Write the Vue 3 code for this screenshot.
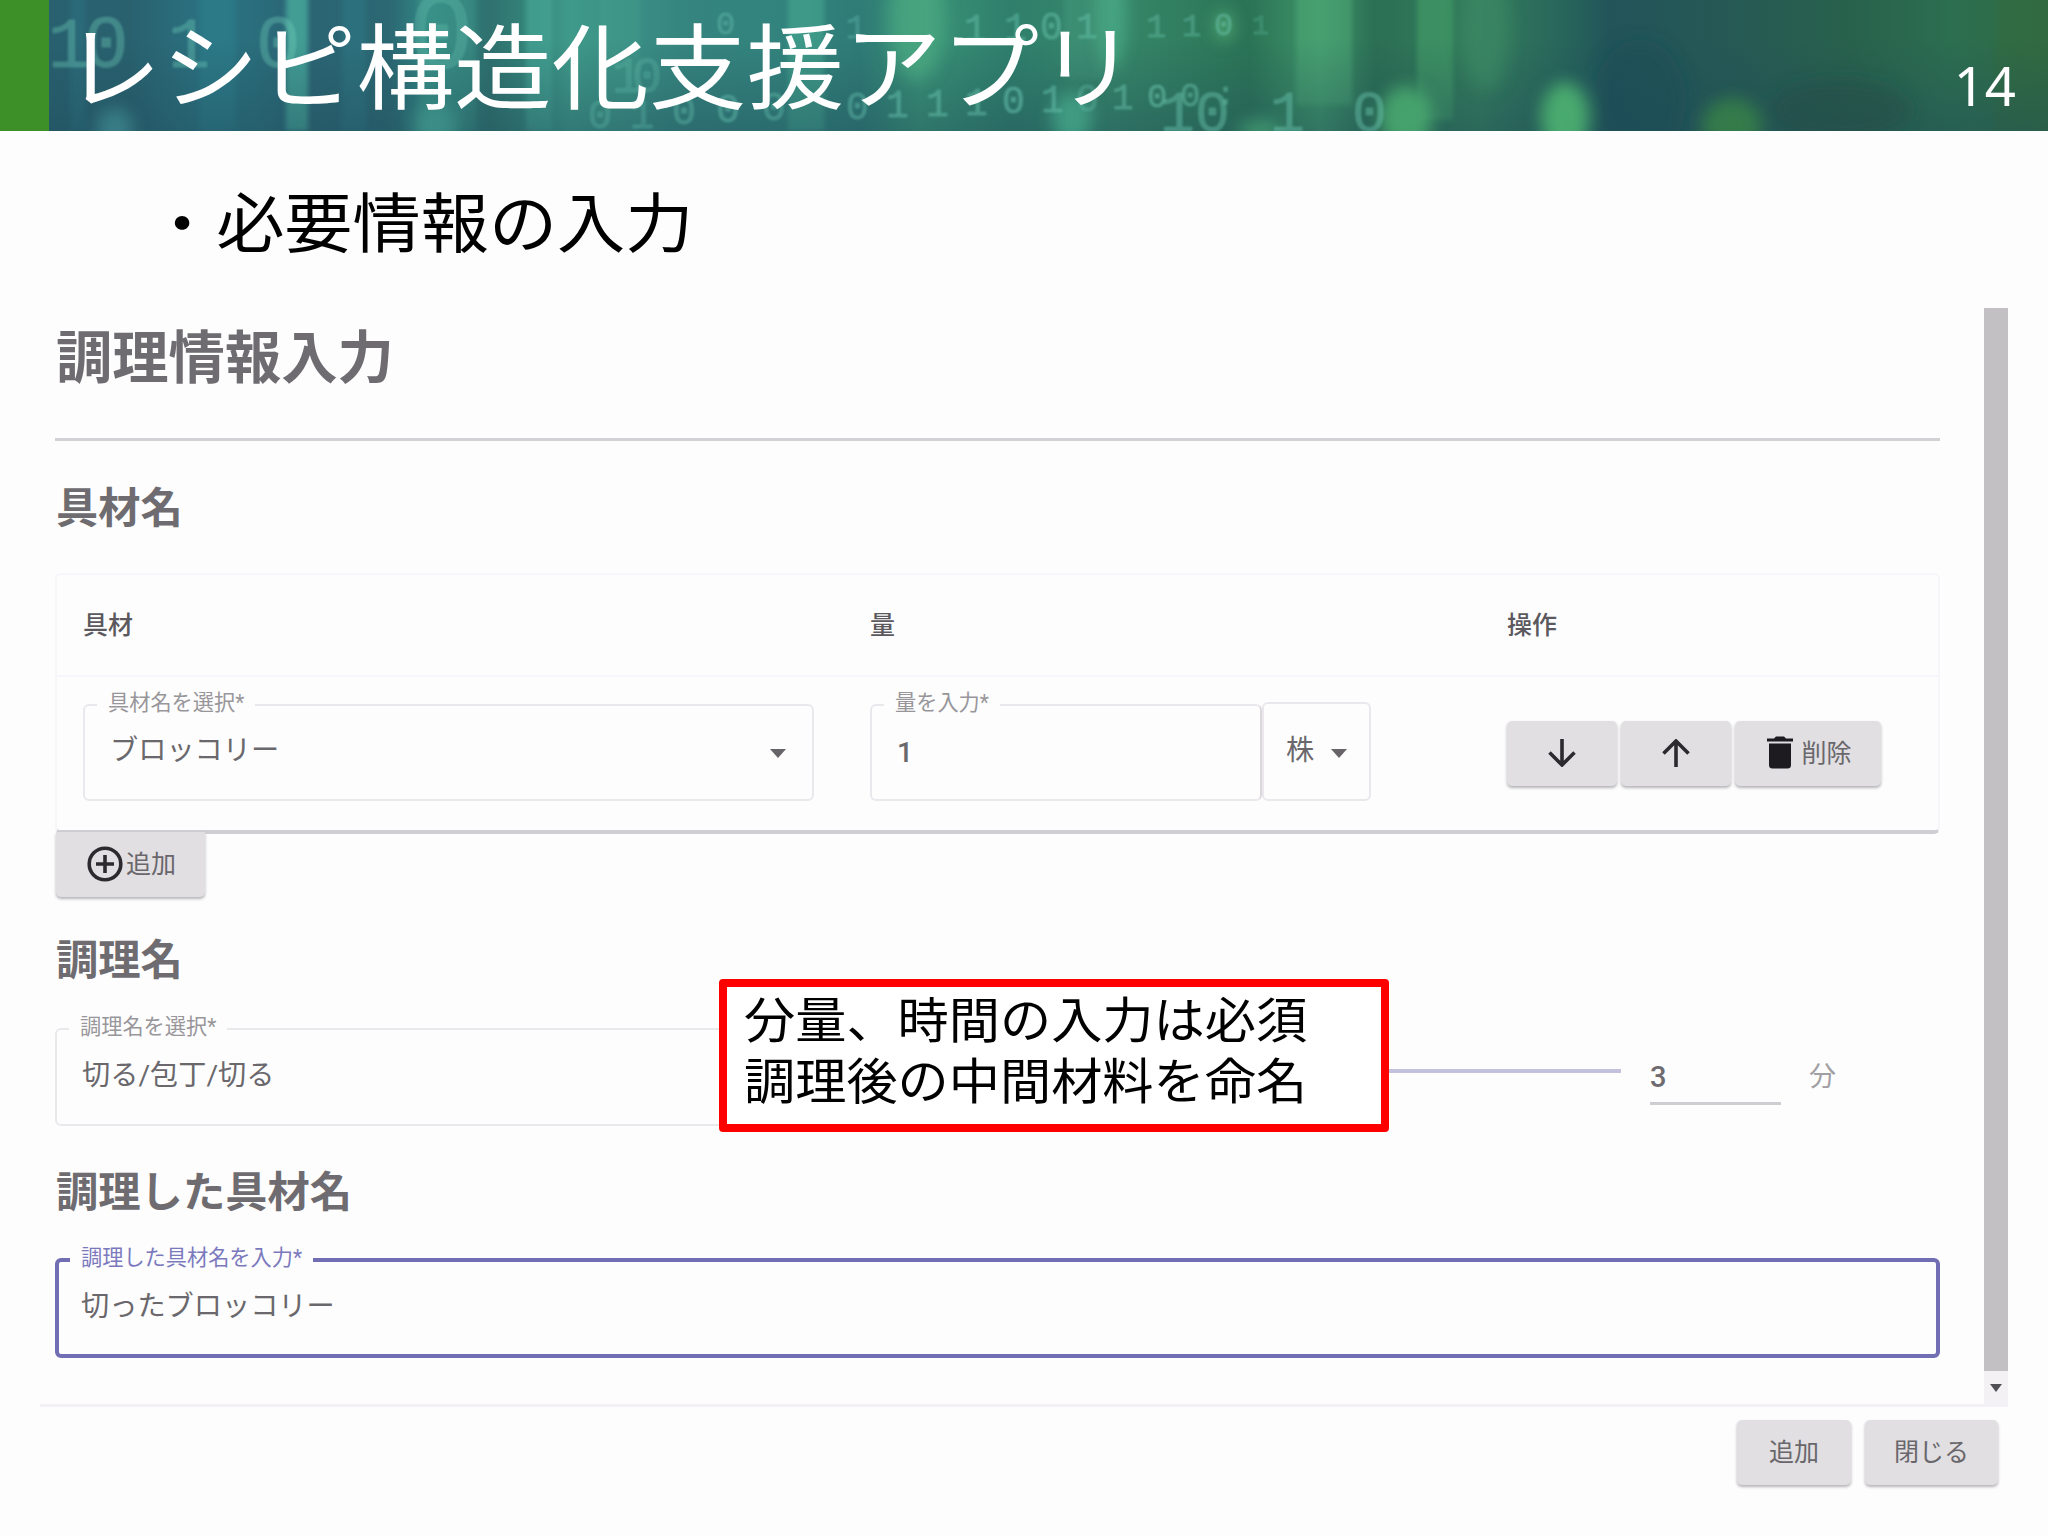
<template>
  <div class="slide">
    <header class="banner">
      <svg class="banner-art" viewBox="0 0 2048 131" preserveAspectRatio="none">
        <defs>
          <linearGradient id="base" x1="0" x2="1" y1="0" y2="0">
            <stop v-for="s in baseStops" :key="s[0]" :offset="s[0] / 2048" :stop-color="s[1]" />
          </linearGradient>
          <linearGradient id="shade" x1="0" x2="0" y1="0" y2="1">
            <stop offset="0.3" stop-color="#1f4a58" stop-opacity="0" />
            <stop offset="1" stop-color="#1f4a58" stop-opacity="0.4" />
          </linearGradient>
          <filter id="soft" x="-50%" y="-50%" width="200%" height="200%">
            <feGaussianBlur stdDeviation="8" />
          </filter>
          <filter id="streak" x="-50%" y="-10%" width="200%" height="120%">
            <feGaussianBlur stdDeviation="2.5" />
          </filter>
          <filter id="faint"><feGaussianBlur stdDeviation="1.1" /></filter>
        </defs>
        <rect width="2048" height="131" fill="url(#base)" />
        <rect
          v-for="(s, i) in streaks"
          :key="'s' + i"
          :x="s[0]" y="-10" :width="s[1]" :height="s[2] + 10" :fill="s[3]" :opacity="s[4]"
          filter="url(#streak)"
        />
        <rect width="2048" height="131" fill="url(#shade)" />
        <g filter="url(#soft)">
          <ellipse
            v-for="(g, i) in glows"
            :key="'g' + i"
            :cx="g[0]" :cy="g[1]" :rx="g[2]" :ry="g[3]" :fill="g[4]" :opacity="g[5]"
          />
        </g>
        <g class="bits" filter="url(#faint)">
          <text
            v-for="(b, i) in bits"
            :key="'b' + i"
            :x="b[0]" :y="b[1]" :font-size="b[2]" :fill-opacity="b[4]"
          >{{ b[3] }}</text>
        </g>
      </svg>
      <div class="banner-edge"></div>
      <h1 class="banner-title">レシピ構造化支援アプリ</h1>
      <span class="page-no">14</span>
    </header>

    <p class="bullet">・必要情報の入力</p>

    <section class="dialog">
      <div class="dialog-main">
        <div class="dialog-body">
          <h2 class="dialog-title">調理情報入力</h2>
          <hr class="divider" />

          <h3 class="section-title">具材名</h3>
          <div class="table">
            <div class="table-row table-head">
              <span>具材</span>
              <span>量</span>
              <span>操作</span>
            </div>
            <div class="table-row table-line">
              <div class="field food">
                <label>具材名を選択*</label>
                <span>ブロッコリー</span>
                <i class="caret"></i>
              </div>
              <div class="amount">
                <div class="field qty">
                  <label>量を入力*</label>
                  <span>1</span>
                </div>
                <div class="field unit">
                  <span>株</span>
                  <i class="caret"></i>
                </div>
              </div>
              <div class="actions">
                <button class="btn move">
                  <svg width="28" height="28" viewBox="0 0 28 28">
                    <path d="M14 0V26M1.5 13.5L14 26L26.5 13.5" />
                  </svg>
                </button>
                <button class="btn move">
                  <svg width="28" height="28" viewBox="0 0 28 28">
                    <path d="M14 28V2M1.5 14.5L14 2L26.5 14.5" />
                  </svg>
                </button>
                <button class="btn remove">
                  <svg class="solid" width="26" height="33" viewBox="0 0 26 33">
                    <path d="M0 2.5H7L9 0.5H17L19 2.5H26V5.5H0ZM2 7.5H24V29Q24 32.5 20.5 32.5H5.5Q2 32.5 2 29Z" />
                  </svg>
                  <span>削除</span>
                </button>
              </div>
            </div>
          </div>
          <button class="btn add">
            <svg width="36" height="36" viewBox="0 0 36 36">
              <circle cx="18" cy="18" r="15.8" />
              <path d="M18 9V27M9 18H27" />
            </svg>
            <span>追加</span>
          </button>

          <h3 class="section-title cook">調理名</h3>
          <div class="cook-row">
            <div class="field method">
              <label>調理名を選択*</label>
              <span>切る/包丁/切る</span>
            </div>
            <div class="slider"></div>
            <div class="minutes">3</div>
            <span class="minutes-unit">分</span>
          </div>

          <h3 class="section-title result">調理した具材名</h3>
          <div class="field active">
            <label>調理した具材名を入力*</label>
            <span>切ったブロッコリー</span>
          </div>
        </div>
        <div class="scrollbar">
          <div class="thumb"></div>
          <div class="arrow"><i></i></div>
        </div>
      </div>
      <footer class="dialog-foot">
        <button class="btn ok"><span>追加</span></button>
        <button class="btn close"><span>閉じる</span></button>
      </footer>
    </section>

    <div class="callout">
      <p>分量、時間の入力は必須</p>
      <p>調理後の中間材料を命名</p>
    </div>
  </div>
</template>

<script setup>
// [x, color]
const baseStops = [
  [0, '#28606f'], [130, '#29616f'], [200, '#2b7180'], [250, '#2a6f7d'], [300, '#2b6474'],
  [390, '#2b6873'], [430, '#338a85'], [490, '#2f716f'], [520, '#338077'], [570, '#3f9a8a'],
  [690, '#35847f'], [800, '#32837d'], [860, '#2f7b76'], [920, '#3a9377'], [1010, '#2f7f6c'],
  [1110, '#37886a'], [1250, '#2b7456'], [1320, '#3f9569'], [1375, '#2b6f54'], [1480, '#347d5c'],
  [1580, '#25605a'], [1610, '#22545a'], [1740, '#265a54'], [1850, '#28614c'], [1950, '#2c6e50'],
  [2048, '#2f6b44']
]

// [x, width, height, color, opacity]
const streaks = [
  [70, 16, 131, '#2f7887', 0.4],
  [200, 36, 131, '#2f7f8d', 0.6],
  [286, 22, 131, '#46a79b', 0.85],
  [342, 24, 131, '#2f7482', 0.7],
  [418, 58, 131, '#3f9a8c', 0.45],
  [526, 26, 131, '#45a595', 0.7],
  [600, 40, 131, '#44a08e', 0.35],
  [788, 36, 131, '#4bb094', 0.5],
  [1296, 56, 105, '#4fac77', 0.5],
  [1417, 36, 120, '#45a069', 0.6],
  [1064, 40, 80, '#4fa386', 0.3],
  [1995, 53, 131, '#346a38', 0.35]
]

// [cx, cy, rx, ry, color, opacity]
const glows = [
  [115, 128, 18, 20, '#42949a', 0.6],
  [435, 125, 22, 22, '#459c92', 0.6],
  [917, 20, 28, 60, '#4cab82', 0.7],
  [1112, 15, 14, 55, '#4db18a', 0.7],
  [1072, 118, 20, 26, '#46a58a', 0.8],
  [1260, 130, 22, 10, '#49a67a', 0.7],
  [1224, 26, 9, 15, '#5db579', 0.7],
  [1486, 30, 24, 60, '#3b8b66', 0.6],
  [1406, 118, 26, 32, '#4aad70', 0.85],
  [1565, 118, 24, 36, '#4cae70', 0.95],
  [1732, 126, 30, 28, '#3a8548', 0.8],
  [1640, 100, 46, 60, '#1d4c52', 0.4],
  [1840, 110, 70, 30, '#204c45', 0.45]
]

// [x, baseline, size, digit, opacity]
const bits = [
  [48, 67, 70, '1', 0.35], [84, 67, 74, '0', 0.35], [168, 67, 70, '1', 0.35], [256, 67, 74, '0', 0.35],
  [408, 68, 110, '0', 0.25], [612, 92, 50, '1', 0.2], [632, 92, 50, '0', 0.2],
  [588, 128, 40, '0', 0.2], [630, 128, 40, '1', 0.22], [672, 124, 40, '0', 0.3],
  [716, 122, 40, '0', 0.35], [762, 120, 40, '0', 0.3], [846, 119, 38, '0', 0.35],
  [886, 117, 38, '1', 0.4], [926, 116, 38, '1', 0.4], [965, 115, 38, '1', 0.4],
  [1002, 113, 38, '0', 0.45], [1041, 112, 38, '1', 0.4], [1076, 111, 38, '0', 0.25],
  [1112, 109, 36, '1', 0.4], [1147, 107, 34, '0', 0.45], [1180, 106, 34, '0', 0.4],
  [1216, 104, 32, ':', 0.4], [716, 34, 32, '0', 0.3], [846, 38, 34, '1', 0.25],
  [964, 41, 38, '1', 0.35], [1004, 40, 38, '1', 0.35], [1040, 39, 38, '0', 0.4],
  [1076, 38, 36, '1', 0.35], [1146, 37, 34, '1', 0.3], [1182, 36, 32, '1', 0.3],
  [1214, 35, 32, '0', 0.4], [1252, 34, 28, '1', 0.15], [1160, 131, 58, '1', 0.4],
  [1195, 131, 58, '0', 0.4], [1270, 131, 58, '1', 0.4], [1352, 131, 58, '0', 0.4]
]
</script>

<style>
body {
  margin: 0;
  background: #fdfdfd;
}
</style>

<style scoped>
.slide {
  position: relative;
  width: 2048px;
  height: 1536px;
  overflow: hidden;
  background: #fdfdfd;
  font-family: "Noto Sans CJK JP", sans-serif;
  color: #6e6c70;
}

h1,
h2,
h3,
p {
  margin: 0;
}

.banner {
  position: relative;
  display: flex;
  height: 131px;
  color: #fff;
}

.banner-art {
  position: absolute;
  inset: 0;
  width: 2048px;
  height: 131px;
}

.bits {
  font-family: "Liberation Mono", monospace;
  stroke: #74d0ba;
  stroke-width: 1;
  stroke-opacity: 0.25;
  fill: #74d0ba;
}

.banner-edge {
  position: relative;
  width: 49px;
  background: #3d8f28;
}

.banner-title {
  position: relative;
  height: 131px;
  margin-left: 15px;
  font-size: 97.5px;
  font-weight: 400;
  line-height: 123px;
  white-space: nowrap;
  transform: scaleY(0.95);
}

.page-no {
  position: relative;
  margin: 49px 32px 0 auto;
  font-family: "Noto Sans", sans-serif;
  font-size: 54.5px;
  line-height: 72px;
}

.bullet {
  height: 177px;
  padding-left: 148px;
  box-sizing: border-box;
  color: #000;
  font-size: 68.2px;
  line-height: 175px;
  transform: scaleY(0.95);
}

.dialog {
  margin-left: 40px;
  width: 1968px;
}

.dialog-main {
  display: flex;
  height: 1096px;
  border-bottom: 3px solid #f3f1f5;
}

.dialog-body {
  flex: 1;
  padding: 0 44px 0 15px;
}

.dialog-title {
  height: 130px;
  padding-left: 1px;
  font-size: 56.3px;
  font-weight: 700;
  line-height: 92px;
}

.divider {
  height: 3px;
  margin: 0;
  border: 0;
  background: #d3d1d5;
}

.section-title {
  height: 132px;
  padding-left: 1px;
  font-size: 42.3px;
  font-weight: 700;
  line-height: 128px;
}

.table {
  height: 261px;
  box-sizing: border-box;
  border: 2px solid #f8f6fa;
  border-bottom: 4px solid #d0ced2;
  border-radius: 6px;
}

.table-row {
  display: grid;
  grid-template-columns: 787px 637px 1fr;
  padding-left: 26px;
}

.table-head {
  height: 100px;
  border-bottom: 2px solid #f8f6fa;
  color: #5b595d;
  font-size: 25px;
  font-weight: 500;
  line-height: 97px;
}

.table-line {
  padding-top: 27px;
}

.field {
  position: relative;
  display: flex;
  align-items: center;
  height: 97px;
  box-sizing: border-box;
  padding: 0 20px 3px 25px;
  border: 2px solid #eae8ec;
  border-radius: 6px;
  color: #6a686c;
  font-family: Roboto, "Noto Sans CJK JP", sans-serif;
  font-size: 28.2px;
}

.field > span {
  line-height: 40px;
}

.field label {
  position: absolute;
  top: -18px;
  left: 12px;
  padding: 0 11px;
  background: #fdfdfd;
  color: #98969a;
  font-size: 21.2px;
  line-height: 30px;
  white-space: nowrap;
}

.food {
  width: 731px;
}

.caret {
  margin: 4px 6px 0 auto;
  border: 8px solid transparent;
  border-top: 9px solid #666468;
  border-bottom: 0;
}

.amount {
  display: flex;
}

.qty {
  width: 392px;
  border-right-color: #dad8dc;
}

.qty > span {
  padding-top: 3px;
  font-weight: 500;
}

.unit {
  width: 109px;
  height: 99px;
  margin-top: -2px;
  padding: 0 16px 1px 22px;
}

.unit .caret {
  margin-right: 6px;
}

.actions {
  display: flex;
  gap: 4px;
  padding-top: 17px;
}

.btn {
  display: flex;
  align-items: center;
  justify-content: center;
  height: 65px;
  box-sizing: border-box;
  padding: 0 0 2px;
  border: 0;
  border-radius: 5px;
  background: #e1dfe2;
  box-shadow: 0 2px 3px #b5b3b7;
  color: #69676b;
  font-family: inherit;
  font-size: 25px;
  font-weight: 400;
}

.btn span {
  padding-bottom: 4px;
}

.btn svg {
  fill: none;
  stroke: #2c2a2e;
  stroke-width: 3.6;
}

.btn .solid {
  fill: #1d1b1f;
  stroke: none;
}

.move {
  width: 110px;
}

.remove {
  width: 146px;
  gap: 8px;
  padding-left: 3px;
}

.add {
  width: 149px;
  margin: -2px 0 2px 1px;
  padding-left: 2px;
  gap: 3px;
  border-radius: 0 0 5px 5px;
}

.cook {
  height: 129px;
  line-height: 115px;
}

.cook-row {
  display: flex;
}

.method {
  width: 760px;
  height: 98px;
}

.slider {
  width: 477px;
  height: 4px;
  margin: 41px 29px 0 329px;
  background: #c4c1de;
}

.minutes {
  width: 131px;
  height: 77px;
  box-sizing: border-box;
  border-bottom: 3px solid #cfcdd1;
  font-family: Roboto, sans-serif;
  font-size: 29px;
  font-weight: 500;
  line-height: 98px;
}

.minutes-unit {
  margin-left: 28px;
  color: #a19fa3;
  font-size: 27px;
  line-height: 94px;
}

.result {
  height: 132px;
  line-height: 126px;
}

.active {
  height: 100px;
  padding-left: 22px;
  border: 4px solid #716eb3;
}

.active label {
  top: -19px;
  left: 11px;
  color: #7b79bd;
}

.scrollbar {
  width: 24px;
  display: flex;
  flex-direction: column;
}

.thumb {
  flex: 1;
  background: #c2c0c3;
}

.arrow {
  display: flex;
  align-items: center;
  justify-content: center;
  height: 33px;
  background: #f3f1f4;
}

.arrow i {
  border: 6px solid transparent;
  border-top: 8px solid #515054;
  border-bottom: 0;
}

.dialog-foot {
  display: flex;
  justify-content: flex-end;
  gap: 14px;
  padding: 13px 10px 0 0;
}

.ok {
  width: 114px;
}

.close {
  width: 133px;
}

.callout {
  position: absolute;
  left: 719px;
  top: 979px;
  width: 670px;
  height: 153px;
  box-sizing: border-box;
  padding-left: 17px;
  border: 8px solid #fe0000;
  border-radius: 4px;
  background: #fff;
  color: #000;
  font-size: 51.2px;
  line-height: 61px;
}

.callout p {
  transform: scaleY(0.95);
}
</style>
